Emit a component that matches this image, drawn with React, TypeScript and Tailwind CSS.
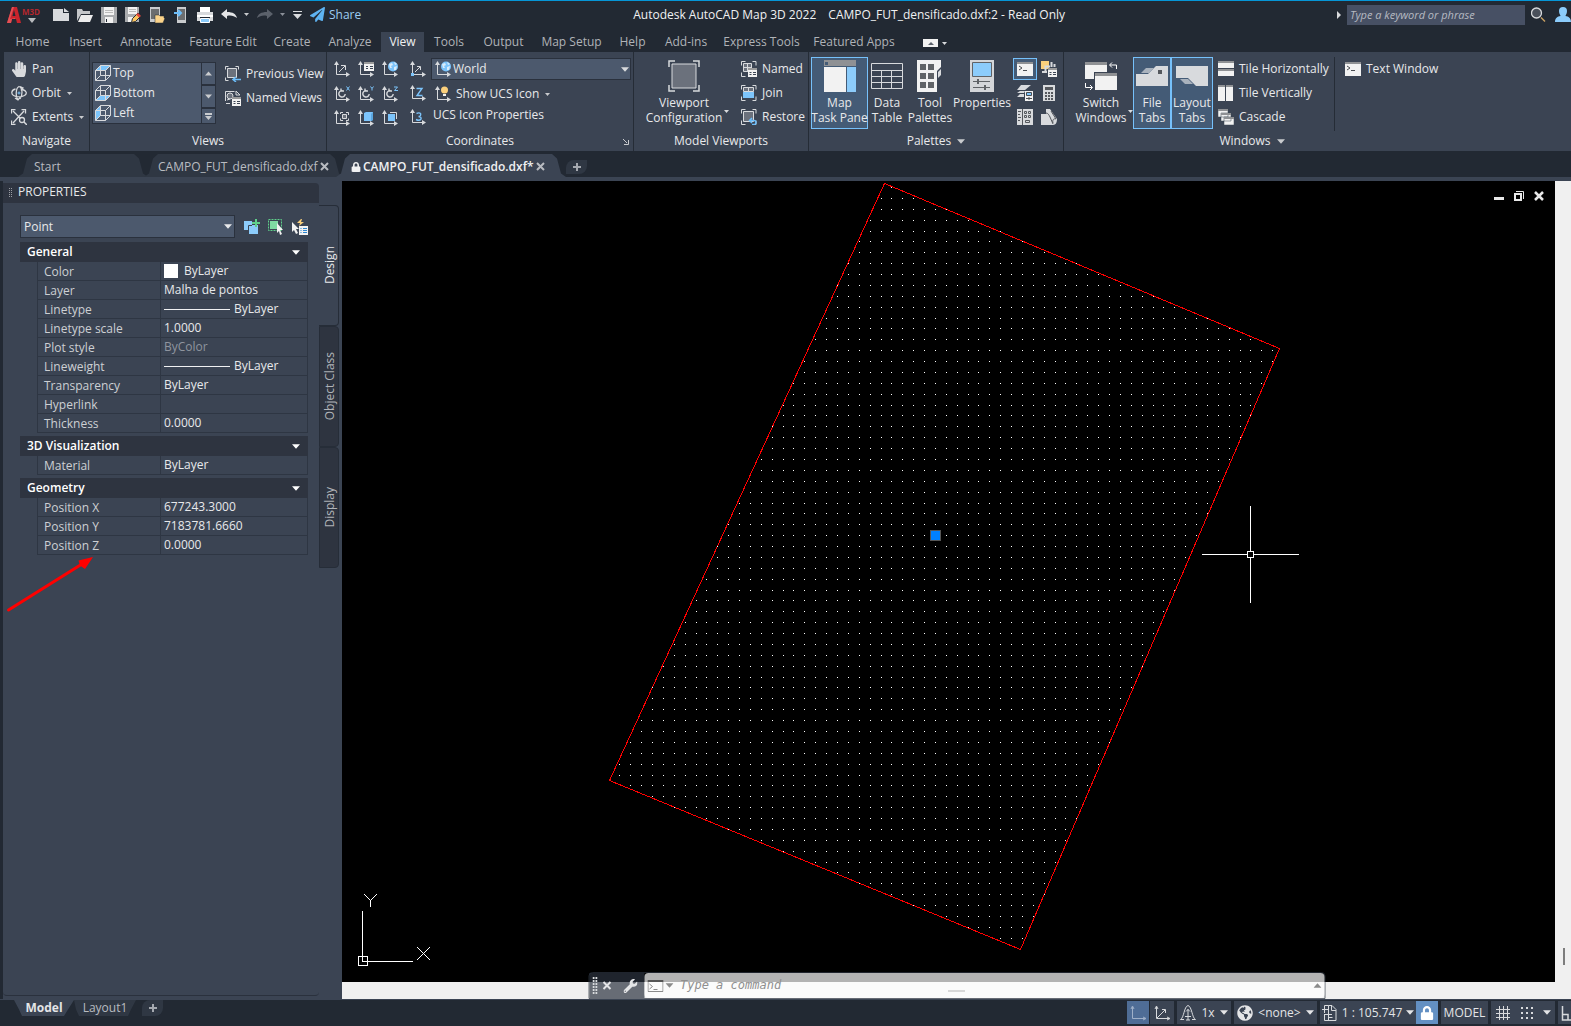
import React from 'react';
import { FaGlobeAmericas, FaHandPaper, FaLock, FaPaperPlane, FaWrench } from 'react-icons/fa';

const Caret: React.FC<{ className?: string; up?: boolean }> = ({ className = '', up }) => (
	<svg width="9" height="5" viewBox="0 0 9 5" className={`shrink-0 ${className}`}>
		<path d={up ? 'M0 5L4.5 0L9 5z' : 'M0 0h9L4.5 5z'} fill="currentColor" />
	</svg>
);

const SmallCaret: React.FC<{ className?: string }> = ({ className = '' }) => (
	<svg width="5" height="3" viewBox="0 0 5 3" className={`shrink-0 ${className}`}>
		<path d="M0 0h5L2.5 3z" fill="currentColor" />
	</svg>
);

const CloseMark = () => (
	<svg width="9" height="9" viewBox="0 0 9 9">
		<path d="M1 1l7 7M8 1L1 8" stroke="currentColor" strokeWidth="2" />
	</svg>
);

const PlusMark = () => (
	<svg width="8" height="8" viewBox="0 0 8 8">
		<path d="M4 0v8M0 4h8" stroke="#a5a9b0" strokeWidth="2" />
	</svg>
);

const Icon: React.FC<{ children: React.ReactNode; size?: number; className?: string }> = ({
	children,
	size = 16,
	className = '',
}) => (
	<svg
		width={size}
		height={size}
		viewBox={`0 0 ${size} ${size}`}
		fill="none"
		stroke="#d8dadd"
		className={`shrink-0 ${className}`}
	>
		{children}
	</svg>
);

/* Two axes with arrow heads, shared by all coordinate system icons */
const UcsIcon: React.FC<{ children?: React.ReactNode }> = ({ children }) => (
	<Icon>
		<path d="M2.5 2v11.5H14" />
		<path d="M0 4L2.5 0L5 4zM12 11l4 2.5L12 16z" fill="#d8dadd" stroke="none" />
		{children}
	</Icon>
);

const Globe = () => (
	<>
		<circle cx="11" cy="5.5" r="5" fill="#7cc4fb" stroke="none" />
		<path d="M7 3l3-1 1 2-2 1 1 2-2 0zM12 1l3 2-2 1zM12 6l3-1-1 4-2 0z" fill="#d9ecfa" stroke="none" />
	</>
);

const RotateMark = ({ axis }: { axis: string }) => (
	<>
		<path d="M9.5 5A3.2 3.2 0 1 0 11.2 8M7 2.5V5h3" strokeWidth="1.4" />
		{axis === 'X' && <path d="M12.5.5l3 4M15.5.5l-3 4" stroke="#7cc4fb" />}
		{axis === 'Y' && <path d="M12.5.5L14 2.5v2M15.5.5L14 2.5" stroke="#7cc4fb" />}
		{axis === 'Z' && <path d="M12 1h3.5l-3 3.5H16" stroke="#7cc4fb" />}
	</>
);

const listBox = (
	<>
		<path d="M6 1h10v9H6z" fill="#f2f2f2" stroke="none" />
		<path d="M6 1h10v2H6z" fill="#9a9a9a" stroke="none" />
		<path d="M8 5.5h2M12 5.5h3M8 7.5h2M12 7.5h3" stroke="#3b4453" />
	</>
);

const listBoxLow = (
	<>
		<path d="M7 7h9v9H7z" fill="#f2f2f2" stroke="none" />
		<path d="M7 7h9v2H7z" fill="#9a9a9a" stroke="none" />
		<path d="M8.5 11.5h2M12 11.5h3M8.5 13.5h2M12 13.5h3" stroke="#3b4453" />
	</>
);

const ucsTools = [
	{ label: 'UCS', mark: <path d="M5 11l6-6M7 4.5h4.5V9" /> },
	{ label: 'Named UCS', mark: listBox },
	{ label: 'World', mark: <Globe /> },
	{ label: 'Rotate X', mark: <RotateMark axis="X" /> },
	{ label: 'Rotate Y', mark: <RotateMark axis="Y" /> },
	{ label: 'Rotate Z', mark: <RotateMark axis="Z" /> },
	{
		label: 'View UCS',
		mark: (
			<>
				<path d="M8.5 4.5h4v4h-4z" fill="#6b717c" />
				<path d="M6.5 4V2.5H9M12 2.5h2.5V5M6.5 8.5v2H9M12 10.5h2.5v-2" />
			</>
		),
	},
	{
		label: 'Object UCS',
		mark: (
			<>
				<path d="M6 3l2-1h7v8l-2 1H6z" fill="#7cc4fb" stroke="none" />
				<path d="M13 4l2-2v8l-2 1z" fill="#5aa6df" stroke="none" />
			</>
		),
	},
	{
		label: 'Face UCS',
		mark: (
			<>
				<path d="M6 4h7v7H6z" fill="#7cc4fb" stroke="none" />
				<path d="M8 2.5h6.5V9" />
			</>
		),
	},
];

const ucsSideTools = [
	{
		label: 'Origin',
		mark: (
			<>
				<path d="M5 11l5-5M7 5.5h3.5V9" />
				<path d="M1 12h3v3H1z" fill="#7cc4fb" stroke="none" />
			</>
		),
	},
	{ label: 'Z-Axis Vector', mark: <path d="M6.5 3.5H12l-5 7h5.5" stroke="#7cc4fb" strokeWidth="1.4" /> },
	{
		label: '3-Point',
		mark: (
			<path
				d="M6.5 4.5c3-1.5 5 0 4 2-.5 1-2 1-2 1 2 0 3 1 2.5 2.5-1 1.5-3 1.5-5 .5"
				stroke="#7cc4fb"
				strokeWidth="1.4"
			/>
		),
	},
];

const menuTabs = [
	{ label: 'Home', width: 'w-[55px]' },
	{ label: 'Insert', width: 'w-[51px]' },
	{ label: 'Annotate', width: 'w-[70px]' },
	{ label: 'Feature Edit', width: 'w-[84px]' },
	{ label: 'Create', width: 'w-[54px]' },
	{ label: 'Analyze', width: 'w-[62px]' },
	{ label: 'View', width: 'w-[43px]' },
	{ label: 'Tools', width: 'w-[50px]' },
	{ label: 'Output', width: 'w-[59px]' },
	{ label: 'Map Setup', width: 'w-[77px]' },
	{ label: 'Help', width: 'w-[45px]' },
	{ label: 'Add-ins', width: 'w-[62px]' },
	{ label: 'Express Tools', width: 'w-[89px]' },
	{ label: 'Featured Apps', width: 'w-[96px]' },
];

const quickTools = [
	{
		label: 'New',
		icon: <path d="M0 2h10v4h6v8H0zM11 1l5 4h-5z" fill="#d8dadd" stroke="none" />,
	},
	{
		label: 'Open',
		icon: (
			<>
				<path d="M0 14V2h5l1 2h7v3H4z" fill="#c4c6c9" stroke="none" />
				<path d="M4 8h12l-3 7H1z" fill="#ececec" stroke="none" />
			</>
		),
	},
	{
		label: 'Save',
		icon: (
			<>
				<path d="M0 0h16v16H0z" fill="#a9abae" stroke="none" />
				<path d="M3 0h10v8H3zM4 10h8v6H4z" fill="#f2f2f2" stroke="none" />
				<path d="M4 3.5h8M4 5.5h8" stroke="#bbb" />
				<path d="M5.5 12v3" stroke="#222933" />
			</>
		),
	},
	{
		label: 'Save As',
		icon: (
			<>
				<path d="M0 0h14v15H0z" fill="#a9abae" stroke="none" />
				<path d="M3 0h9v7H3zM3 10h5v5H3z" fill="#f2f2f2" stroke="none" />
				<path d="M4 2.5h7M4 4.5h7" stroke="#bbb" />
				<path d="M6.5 15.5l1-4L13 6l3 3-5.5 5.5z" fill="#fbc55f" stroke="#222933" />
				<path d="M13 6l3 3-2 1.5-3-3z" fill="#e0453a" stroke="none" />
			</>
		),
	},
	{
		label: 'Open from Web',
		icon: (
			<>
				<path d="M1 0h10v15H1z" fill="#c9cbce" stroke="none" />
				<path d="M2 2h8v10H2z" fill="#6b6d70" stroke="none" />
				<path d="M6 16V8h4l1 1h4v2h1l-2 5z" fill="#fbd38a" stroke="#222933" strokeWidth=".5" />
			</>
		),
	},
	{
		label: 'Save to Web',
		icon: (
			<>
				<path d="M4 0h9v16H4z" fill="#c9cbce" stroke="none" />
				<path d="M5 2h7v11H5z" fill="#6b6d70" stroke="none" />
				<path d="M1 6h6M5 3l3 3-3 3" stroke="#6bbdfa" strokeWidth="2" />
			</>
		),
	},
	{
		label: 'Plot',
		icon: (
			<>
				<path d="M3 0h10v5H3z" fill="#fff" stroke="none" />
				<path d="M0 5h16v3H0zM0 10h3v4H0zM13 10h3v4h-3z" fill="#d8dadd" stroke="none" />
				<path d="M0 8h16v2H0z" fill="#fff" stroke="none" />
				<path d="M3.5 11.5h9v4h-9z" fill="#8cccfb" stroke="#fff" />
			</>
		),
	},
];

const bracket = 'M.5 4.5v-4h4M11.5.5H15v4M.5 11.5v4h4M11.5 15.5H15v-4';

const TitleBar = () => (
	<header className="flex h-8 items-center border-t border-[#0696d7] pb-1">
		<button aria-label="Application menu" className="ml-[7px] w-[46px]">
			<svg width="36" height="18" viewBox="0 0 36 18">
				<path d="M0 17L5 1h5l4 16h-4l-1-4H5l-1 4z" fill="#c8242c" />
				<path d="M7 4l1.5 6h-3z" fill="#222933" />
				<path d="M0 17L5 1h2L3 13l5-1v1H5l-1 4z" fill="#e35055" />
				<path d="M21 12h8l-4 5z" fill="#b9bbbe" />
				<text x="15" y="9" fontSize="8" fontWeight="700" fill="#b3262d">
					M3D
				</text>
			</svg>
		</button>
		<div className="flex gap-2">
			{quickTools.map((tool) => (
				<button key={tool.label} aria-label={tool.label}>
					<Icon>{tool.icon}</Icon>
				</button>
			))}
		</div>
		<button aria-label="Undo" className="ml-2">
			<Icon>
				<path d="M0 7l6-5v3c6 0 9 2 10 6-3-2-6-3-10-2v3z" fill="#e4e5e7" stroke="none" />
			</Icon>
		</button>
		<SmallCaret className="ml-[7px] text-[#c9cbce]" />
		<button aria-label="Redo" className="ml-2">
			<Icon>
				<path d="M16 7l-6-5v3C4 5 1 7 0 11c3-2 6-3 10-2v3z" fill="#5b616b" stroke="none" />
			</Icon>
		</button>
		<SmallCaret className="ml-[7px] text-[#8b9099]" />
		<button aria-label="Customize toolbar" className="ml-2">
			<svg width="9" height="8" viewBox="0 0 9 8">
				<path d="M0 0h9v1H0zM0 3h9L4.5 8z" fill="#d8dadd" />
			</svg>
		</button>
		<button className="ml-2 flex items-center gap-1 text-[#9ccdf2]">
			<FaPaperPlane size={15} className="text-[#5eb3f2]" />
			Share
		</button>
		<h1 className="flex flex-1 justify-center gap-3 text-[#f0f1f2]">
			<span>Autodesk AutoCAD Map 3D 2022</span>
			<span>CAMPO_FUT_densificado.dxf:2 - Read Only</span>
		</h1>
		<svg width="4" height="8" viewBox="0 0 4 8">
			<path d="M0 0l4 4-4 4z" fill="#d8dadd" />
		</svg>
		<input
			aria-label="Search"
			placeholder="Type a keyword or phrase"
			className="ml-[6px] h-5 w-[178px] bg-[#475064] px-[3px] text-[11px] italic placeholder:text-[#b6bac2]"
		/>
		<button aria-label="Search" className="ml-[6px]">
			<Icon>
				<circle cx="5.5" cy="6" r="5" fill="#4a505b" strokeWidth="1.3" />
				<path d="M10 10.5l4 4" stroke="#c9a063" strokeWidth="1.5" />
			</Icon>
		</button>
		<button aria-label="Account" className="ml-2">
			<Icon>
				<path
					d="M4 4a4 4 0 0 1 8 0c0 3-1.5 4-1.5 5 3 .5 5.500 2 5.500 6H0c0-4 2.500-5.500 5.500-6C5.500 8 4 7 4 4z"
					fill="#8cccfb"
					stroke="none"
				/>
			</Icon>
		</button>
	</header>
);

const MenuTabs = () => (
	<nav className="flex h-5 items-center pl-[5px]">
		{menuTabs.map((tab) => (
			<button
				key={tab.label}
				className={`h-5 shrink-0 whitespace-nowrap ${tab.width} ${
					tab.label === 'View' ? 'bg-[#3b4453] text-[#f0f1f2]' : 'text-[#b0b3b8]'
				}`}
			>
				{tab.label}
			</button>
		))}
		<button aria-label="Minimize ribbon" className="ml-[21px] flex items-center gap-1 pt-[2px] text-[#d8dadd]">
			<svg width="15" height="8" viewBox="0 0 15 8">
				<path d="M0 0h15v8H0z" fill="#f2f2f2" />
				<path d="M5 6l3-3 3 3z" fill="#5b616b" />
			</svg>
			<SmallCaret />
		</button>
	</nav>
);

const RibbonPanel: React.FC<{
	title: string;
	width: string;
	children: React.ReactNode;
	caret?: boolean;
	launcher?: boolean;
	last?: boolean;
}> = ({ title, width, children, caret, launcher, last }) => (
	<section
		className={`flex shrink-0 flex-col ${width} ${last ? '' : 'border-r border-[#252c36]'}`}
	>
		<div className="flex h-[79px] pt-[5px]">{children}</div>
		<h2 className="relative flex h-5 items-center justify-center gap-[6px] text-[#e8e9eb]">
			{title}
			{caret && <Caret className="w-2 text-[#c9cbce]" />}
			{launcher && (
				<svg width="6" height="6" viewBox="0 0 6 6" className="absolute right-1 bottom-[6px]">
					<path d="M0 0l4 4M5.5 1v4.5H1" stroke="#c9cbce" fill="none" />
				</svg>
			)}
		</h2>
	</section>
);

const SmallButton: React.FC<{ icon: React.ReactNode; label: string; caret?: boolean }> = ({
	icon,
	label,
	caret,
}) => (
	<button className="flex h-6 items-center gap-[5px] whitespace-nowrap">
		{icon}
		{label}
		{caret && <SmallCaret className="ml-px text-[#c9cbce]" />}
	</button>
);

const BigButton: React.FC<{
	icon: React.ReactNode;
	lines: string[];
	width: string;
	active?: boolean;
}> = ({ icon, lines, width, active }) => (
	<button
		className={`flex h-[72px] shrink-0 flex-col items-center border pt-[2px] leading-[15px] whitespace-nowrap ${width} ${
			active ? 'border-[#76c1fb] bg-[#445b76]' : 'border-transparent'
		}`}
	>
		<Icon size={32} className="mb-[3px]">
			{icon}
		</Icon>
		{lines.map((line) => (
			<span key={line}>{line}</span>
		))}
	</button>
);

const cubeEdges = 'M.5 5.5h10v10H.5zM5.5.5h10v10h-10zM.5 5.5l5-5M10.5 5.5l5-5M10.5 15.5l5-5M.5 15.5l5-5';

const galleryViews = [
	{ label: 'Top', face: 'M.5 5.5l5-5h10l-5 5z' },
	{ label: 'Bottom', face: 'M.5 15.5l5-5h10l-5 5z' },
	{ label: 'Left', face: 'M.5 5.5l5-5v10l-5 5z' },
];

const NavigatePanel = () => (
	<RibbonPanel title="Navigate" width="w-[86px]">
		<div className="flex flex-col items-start pl-[7px]">
			<SmallButton icon={<FaHandPaper size={16} className="text-[#d8dadd]" />} label="Pan" />
			<SmallButton
				icon={
					<Icon>
						<path
							d="M4.5 4C0 5 0 9 2.5 10.5c3 1.5 8 1.5 11 0 3-2 2-5-2-6M7 15C4.5 12 4.5 3 8 1.5c3.5 1 4 8 1 12.5M9 1.5l3 1.5-2 2.5M4 13l3 2 2-2.5"
							strokeWidth="1.3"
						/>
						<path d="M8 6.5v3M6.5 8h3" stroke="#7cc4fb" />
					</Icon>
				}
				label="Orbit"
				caret
			/>
			<SmallButton
				icon={
					<Icon>
						<path d="M2 2l9 9M13 2L2 14M.5 4.5v-4h4M10.5.5h4v4M.5 11.5v4h4" strokeWidth="1.3" />
						<circle cx="11" cy="11" r="2.5" fill="#3b4453" strokeWidth="1.3" />
						<path d="M13 13l3 3" strokeWidth="1.5" />
					</Icon>
				}
				label="Extents"
				caret
			/>
		</div>
	</RibbonPanel>
);

const ViewsPanel = () => (
	<RibbonPanel title="Views" width="w-[237px]">
		<div className="mt-[5px] ml-[2px] flex h-[62px] w-[124px] gap-px border border-[#2a313d] bg-[#2a313d]">
			<div className="flex flex-1 flex-col bg-[#4c596d]">
				{galleryViews.map((view) => (
					<button key={view.label} className="flex h-5 items-center gap-[2px] pl-[2px]">
						<Icon>
							<path d={view.face} fill="#7cc4fb" stroke="none" />
							<path d={cubeEdges} />
						</Icon>
						{view.label}
					</button>
				))}
			</div>
			<div className="flex w-[13px] flex-col gap-[2px] text-[#c9cbce]">
				<button aria-label="Scroll up" className="flex flex-1 items-center justify-center bg-[#4c596d]">
					<Caret up className="w-[7px]" />
				</button>
				<button aria-label="Scroll down" className="flex flex-1 items-center justify-center bg-[#4c596d]">
					<Caret className="w-[7px]" />
				</button>
				<button aria-label="More views" className="flex h-[14px] items-center justify-center bg-[#4c596d]">
					<svg width="7" height="7" viewBox="0 0 7 7">
						<path d="M0 0h7v2H0zM0 3h7L3.5 7z" fill="currentColor" />
					</svg>
				</button>
			</div>
		</div>
		<div className="ml-[9px] flex flex-col items-start pt-[5px]">
			<SmallButton
				icon={
					<Icon>
						<path d="M.5 3.5v-3h3M10.5.5h3v3M.5 11.5v3h3" />
						<path d="M2.5 2.5h9v9h-9z" fill="#6b717c" />
						<path d="M16 13.5H9M11 11l-3 2.5L11 16" stroke="#6bbdfa" strokeWidth="1.5" />
					</Icon>
				}
				label="Previous View"
			/>
			<SmallButton
				icon={
					<Icon>
						<path d="M.5 11V1.5h9M11 1l4 4h-4z" />
						<circle cx="5" cy="6" r="3" fill="#6b717c" />
						<path d="M2 10l3-1M1 13.5h4" />
						{listBoxLow}
					</Icon>
				}
				label="Named Views"
			/>
		</div>
	</RibbonPanel>
);

const CoordinatesPanel = () => (
	<RibbonPanel title="Coordinates" width="w-[307px]" launcher>
		<div className="ml-[7px] grid grid-cols-3 gap-x-2">
			{ucsTools.map((tool) => (
				<button key={tool.label} aria-label={tool.label} className="flex h-6 items-center">
					<UcsIcon>{tool.mark}</UcsIcon>
				</button>
			))}
		</div>
		<div className="ml-3 flex flex-col">
			{ucsSideTools.map((tool) => (
				<button key={tool.label} aria-label={tool.label} className="flex h-6 items-center">
					<UcsIcon>{tool.mark}</UcsIcon>
				</button>
			))}
		</div>
		<div className="ml-[5px] flex w-[200px] flex-col items-start pt-px">
			<div className="flex h-[22px] w-full items-center border border-[#2a313d] bg-[#4c596d] pr-px pl-[3px]">
				<UcsIcon>
					<Globe />
				</UcsIcon>
				<select aria-label="Current UCS" className="ml-[2px] flex-1 appearance-none">
					<option>World</option>
				</select>
				<Caret className="w-2 text-[#d8dadd]" />
			</div>
			<div className="mt-[2px] ml-1 flex">
				<SmallButton
					icon={
						<UcsIcon>
							<circle cx="9.5" cy="4" r="3.5" fill="#fbd07c" stroke="none" />
							<path d="M8 8h3v2H8z" fill="#f2f2f2" stroke="none" />
						</UcsIcon>
					}
					label="Show UCS Icon"
					caret
				/>
			</div>
			<button className="ml-[2px] h-[18px]">UCS Icon Properties</button>
		</div>
	</RibbonPanel>
);

const ViewportsPanel = () => (
	<RibbonPanel title="Model Viewports" width="w-[175px]">
		<div className="ml-[10px] flex items-start">
			<BigButton
				width="w-20"
				lines={['Viewport', 'Configuration']}
				icon={
					<>
						<path d="M4 4h24v24H4z" fill="#6b717c" />
						<path d="M1 7V1h6M25 1h6v6M1 25v6h6M25 31h6v-6" strokeWidth="1.5" />
					</>
				}
			/>
			<SmallCaret className="mt-[53px] text-[#d8dadd]" />
		</div>
		<div className="ml-3 flex flex-col items-start">
			<SmallButton
				icon={
					<Icon>
						<path d={bracket} />
						<path d="M2.5 2.5h8v8h-8zM6.5 2.5v8M2.5 6.5h8" fill="#6b717c" />
						{listBoxLow}
					</Icon>
				}
				label="Named"
			/>
			<SmallButton
				icon={
					<Icon>
						<path d={bracket} />
						<path d="M2 7h11v6H2z" fill="#7cc4fb" stroke="none" />
						<path d="M2.5 2.5h5v4h-5zM7.5 2.5h5v4h-5z" fill="#6b717c" />
					</Icon>
				}
				label="Join"
			/>
			<SmallButton
				icon={
					<Icon>
						<path d={bracket} />
						<path d="M2.5 2.5h10v10h-10z" fill="#6b717c" />
						<path
							d="M8 11.5h5a2 2 0 0 1 0 4h-2M11 9l-2.5 2.5L11 14"
							stroke="#6bbdfa"
							strokeWidth="1.5"
						/>
					</Icon>
				}
				label="Restore"
			/>
		</div>
	</RibbonPanel>
);

const consoleIcon = (
	<>
		<path d="M0 1h16v14H0z" fill="#f2f2f2" stroke="none" />
		<path d="M0 1h16v2H0z" fill="#8f9194" stroke="none" />
		<path d="M2 5l3 2-3 2M6 9.5h4" stroke="#4a4d52" />
	</>
);

const paletteTools = [
	{ label: 'Command Line', icon: consoleIcon },
	{
		label: 'Layer Properties',
		icon: (
			<>
				<path d="M0 0h8v8H0z" fill="#fbd07c" stroke="none" />
				<path d="M4.5 11V5.5H9M10.5 1v5M13.5 3v3M1 11h5" strokeWidth="2" />
				{listBoxLow}
			</>
		),
	},
	{
		label: 'Sheet Set Manager',
		icon: (
			<>
				<path d="M4 0h10L8 5H0zM3 6h5l-1 2H0zM3 9h4v3H0z" fill="#d8dadd" stroke="none" />
				<path d="M8 6h8v10H8z" fill="#f2f2f2" stroke="none" />
				<path d="M9.5 7.5h5v3h-5z" fill="#7cc4fb" stroke="#4a4d52" />
				<path d="M9 13.5h6M12 12v3" stroke="#4a4d52" />
			</>
		),
	},
	{
		label: 'Quick Calculator',
		icon: (
			<>
				<path d="M2 0h12v16H2z" fill="#d8dadd" stroke="none" />
				<path d="M4 2h8v3H4z" fill="#55585d" stroke="none" />
				<path d="M4 8h8M4 11h8M4 14h8" stroke="#55585d" strokeWidth="2" strokeDasharray="2 1" />
			</>
		),
	},
	{
		label: 'DesignCenter',
		icon: (
			<>
				<path d="M0 0h16v16H0z" fill="#d8dadd" stroke="none" />
				<path d="M1 2.5h3M1 5.5h2M1 8.5h3M1 11.5h2M5.5 0v16" stroke="#55585d" />
				<path
					d="M7.5 2.5h2v2h-2zM11.5 2.5h2v2h-2zM7.5 6.5h2v2h-2zM11.5 6.5h2v2h-2zM8.5 11.5h4v2h-4z"
					stroke="#55585d"
				/>
			</>
		),
	},
	{
		label: 'Markup Set Manager',
		icon: (
			<>
				<path d="M0 5h5V0h4l7 10c0 3-1 6-4 6H0z" fill="#d8dadd" stroke="none" />
				<path d="M5 4c2 0 3 2 4 4l3 7M10 2l5 8c-2-1-4 1-3 4" stroke="#55585d" />
			</>
		),
	},
];

const PalettesPanel = () => (
	<RibbonPanel title="Palettes" width="w-[255px]" caret>
		<div className="ml-[2px] flex">
			<BigButton
				active
				width="w-[57px]"
				lines={['Map', 'Task Pane']}
				icon={
					<g stroke="none">
						<path d="M0 0h32v6H0z" fill="#8f9194" />
						<path d="M1 2h3v3H1z" fill="#445b76" />
						<path d="M0 7h22v25H0z" fill="#f2f2f2" />
						<path d="M23 7h9v25h-9z" fill="#8cccfb" />
					</g>
				}
			/>
			<BigButton
				width="w-[38px]"
				lines={['Data', 'Table']}
				icon={<path d="M.5 3.5h31v25H.5zM.5 10.5h31M.5 16.5h31M.5 22.5h31M10.5 10.5v18M20.5 10.5v18" />}
			/>
			<BigButton
				width="w-12"
				lines={['Tool', 'Palettes']}
				icon={
					<g stroke="none">
						<path d="M3 0h24v7l-4 4v21H3z" fill="#f2f2f2" />
						<path d="M27 9v6l-3 3v-6z" fill="#d8dadd" />
						<path
							d="M6 4h6v6H6zM14 4h6v6h-6zM6 13h6v6H6zM14 13h6v6h-6zM6 22h6v6H6zM14 22h6v6h-6z"
							fill="#606367"
						/>
					</g>
				}
			/>
			<BigButton
				width="w-14"
				lines={['Properties']}
				icon={
					<>
						<path d="M4 0h24v32H4z" fill="#d4d6d9" stroke="none" />
						<path d="M6.5 2.5h19v14h-19z" fill="#8cccfb" stroke="#606367" />
						<path d="M7 21.5h17M7 27.5h17" stroke="#606367" />
						<path d="M12 19v5M19 25v5" stroke="#606367" strokeWidth="2" />
					</>
				}
			/>
		</div>
		<div className="ml-[3px] grid h-[72px] grid-cols-[24px_24px] place-items-center">
			{paletteTools.map((tool, i) => (
				<button
					key={tool.label}
					aria-label={tool.label}
					className={`flex h-[22px] w-6 items-center justify-center border ${
						i === 0 ? 'border-[#76c1fb] bg-[#445b76]' : 'border-transparent'
					}`}
				>
					<Icon>{tool.icon}</Icon>
				</button>
			))}
		</div>
	</RibbonPanel>
);

const WindowsPanel = () => (
	<RibbonPanel title="Windows" width="w-[376px]" caret last>
		<div className="ml-[10px] flex items-start">
			<BigButton
				width="w-[54px]"
				lines={['Switch', 'Windows']}
				icon={
					<>
						<g stroke="none">
							<path d="M0 2h22v17H0z" fill="#f2f2f2" />
							<path d="M0 2h22v3H0z" fill="#8f9194" />
							<path d="M9 12h23v18H9z" fill="#3b4453" />
							<path d="M10 13h22v17H10z" fill="#f2f2f2" />
							<path d="M10 13h22v3H10z" fill="#8f9194" />
						</g>
						<path d="M31.5 9V5H25M27 2.5L24.5 5 27 7.5M.5 23v4.5H7M5 25l2.5 2.5L5 30" stroke="#fff" />
					</>
				}
			/>
			<SmallCaret className="mt-[53px] text-[#d8dadd]" />
		</div>
		<BigButton
			active
			width="w-[38px]"
			lines={['File', 'Tabs']}
			icon={
				<g stroke="none">
					<path d="M0 26V14h12l8-8h12v20z" fill="#d8dadd" />
					<path d="M5 13l5-5h8l-5 5z" fill="#a9b2bd" />
					<path d="M22 10h4v4h-4z" fill="#55585d" />
				</g>
			}
		/>
		<BigButton
			active
			width="w-[42px]"
			lines={['Layout', 'Tabs']}
			icon={
				<g stroke="none">
					<path d="M0 6h32v20H20l-8-8H0z" fill="#d8dadd" />
					<path d="M4 19h8l5 5H9z" fill="#a9b2bd" />
				</g>
			}
		/>
		<div className="ml-[5px] flex w-[117px] flex-col items-start border-r border-[#252c36]">
			<SmallButton
				icon={
					<Icon>
						<path d="M0 0h16v7H0zM0 8h16v7H0z" fill="#f2f2f2" stroke="none" />
						<path d="M0 0h16v2H0zM0 8h16v2H0z" fill="#8f9194" stroke="none" />
					</Icon>
				}
				label="Tile Horizontally"
			/>
			<SmallButton
				icon={
					<Icon>
						<path d="M0 0h7v16H0zM8 0h7v16H8z" fill="#f2f2f2" stroke="none" />
						<path d="M0 0h7v2H0zM8 0h7v2H8z" fill="#8f9194" stroke="none" />
					</Icon>
				}
				label="Tile Vertically"
			/>
			<SmallButton
				icon={
					<Icon>
						<path
							d="M0 0h10v8H0zM3 4h10v8H3zM6 8h10v8H6z"
							fill="#f2f2f2"
							stroke="#3b4453"
							strokeWidth=".5"
						/>
						<path d="M0 0h10v2H0zM3 4h10v2H3zM6 8h10v2H6z" fill="#8f9194" stroke="none" />
					</Icon>
				}
				label="Cascade"
			/>
		</div>
		<div className="ml-[10px]">
			<SmallButton icon={<Icon>{consoleIcon}</Icon>} label="Text Window" />
		</div>
	</RibbonPanel>
);

const fileTabClip =
	'[clip-path:polygon(0_100%,5px_85%,9px_20%,14px_0,calc(100%-14px)_0,calc(100%-9px)_20%,calc(100%-5px)_85%,100%_100%)]';

const FileTabs = () => (
	<nav className="flex h-[30px] items-start border-b-4 border-[#3b4453] pt-[3px] text-[#b9bcc1]">
		<div className={`ml-[18px] flex h-[23px] w-[130px] items-center bg-[#2f3743] pt-[2px] pl-4 ${fileTabClip}`}>
			<button>Start</button>
		</div>
		<div className={`-ml-1 flex h-[23px] w-[200px] items-center bg-[#2f3743] pt-[2px] pl-[14px] ${fileTabClip}`}>
			<button className="w-[162px] text-left whitespace-nowrap">CAMPO_FUT_densificado.dxf</button>
			<button aria-label="Close tab">
				<CloseMark />
			</button>
		</div>
		<div
			className={`-ml-2 flex h-[23px] w-[230px] items-center bg-[#3b4453] pt-[2px] pl-[15px] text-[#f0f1f2] ${fileTabClip}`}
		>
			<FaLock size={10} />
			<button className="ml-[2px] w-[173px] text-left font-semibold whitespace-nowrap">
				CAMPO_FUT_densificado.dxf*
			</button>
			<button aria-label="Close tab" className="text-[#b9bcc1]">
				<CloseMark />
			</button>
		</div>
		<button
			aria-label="New tab"
			className="mt-[6px] flex h-[14px] w-[21px] items-center justify-center rounded-tl-lg rounded-br-lg bg-[#2f3743]"
		>
			<PlusMark />
		</button>
	</nav>
);

const lineSample = (
	<span className="flex items-center gap-1">
		<span className="h-px w-[66px] bg-[#f0f1f2]" />
		ByLayer
	</span>
);

const propertyGroups: { title: string; rows: { name: string; value: React.ReactNode }[] }[] = [
	{
		title: 'General',
		rows: [
			{
				name: 'Color',
				value: (
					<span className="flex items-center gap-[6px]">
						<span className="h-[14px] w-[14px] bg-white" />
						ByLayer
					</span>
				),
			},
			{ name: 'Layer', value: 'Malha de pontos' },
			{ name: 'Linetype', value: lineSample },
			{ name: 'Linetype scale', value: '1.0000' },
			{ name: 'Plot style', value: <span className="text-[#8f959f]">ByColor</span> },
			{ name: 'Lineweight', value: lineSample },
			{ name: 'Transparency', value: 'ByLayer' },
			{ name: 'Hyperlink', value: '' },
			{ name: 'Thickness', value: '0.0000' },
		],
	},
	{ title: '3D Visualization', rows: [{ name: 'Material', value: 'ByLayer' }] },
	{
		title: 'Geometry',
		rows: [
			{ name: 'Position X', value: '677243.3000' },
			{ name: 'Position Y', value: '7183781.6660' },
			{ name: 'Position Z', value: '0.0000' },
		],
	},
];

const PropertiesPalette = () => (
	<aside className="relative ml-[3px] flex w-[339px] shrink-0 bg-[#3b4453]">
		<div className="flex w-[316px] flex-col">
			<div className="mt-[2px] flex h-5 items-center gap-[6px] rounded-tr bg-[#2e3440] pl-[6px]">
				<svg width="3" height="10" viewBox="0 0 3 10">
					<path d="M.5 0v10M2.5 0v10" stroke="#9a9da3" strokeDasharray="1 1" />
				</svg>
				<h2 className="pb-[3px]">PROPERTIES</h2>
			</div>
			<div className="mb-[3px] flex-1 rounded-b border-b border-[#2a313d] pt-3 pr-[11px] pl-[17px]">
				<div className="mb-1 flex items-center">
					<div className="mr-2 flex h-[23px] w-[215px] items-center border border-[#2a313d] bg-[#4c596d] pr-[2px] pl-[3px]">
						<select aria-label="Selection" className="flex-1 appearance-none">
							<option>Point</option>
						</select>
						<Caret className="w-2" />
					</div>
					<div className="ml-px flex gap-2">
						<button aria-label="Toggle pickadd">
							<Icon>
								<path d="M0 2h8v4h6v9H5v-4H0z" fill="#8cccfb" stroke="none" />
								<path d="M4.5 11V6.5H8" stroke="#3b4453" />
								<path d="M12 0v8M8 4h8" stroke="#5fd08b" strokeWidth="2" />
							</Icon>
						</button>
						<button aria-label="Select objects">
							<Icon>
								<path d="M.5.5h13v11H.5z" stroke="#5fd08b" strokeDasharray="2 1" />
								<path d="M2 2h8v8H2z" fill="#7fd9a2" stroke="none" />
								<path d="M9 4l6 7h-3l2 4-2 1-1-4-2 2z" fill="#f2f2f2" stroke="none" />
							</Icon>
						</button>
						<button aria-label="Quick select">
							<Icon>
								<path d="M9 0L5 4h3L7 7l5-4H9l1-3z" fill="#fbd07c" stroke="none" />
								<path d="M0 3l7 7H4l2 4-2 1-2-4-2 2z" fill="#f2f2f2" stroke="none" />
								<path d="M7 7h9v9H7z" fill="#f2f2f2" stroke="none" />
								<path
									d="M8.5 9.5h1M11 9.5h4M8.5 11.5h1M11 11.5h4M8.5 13.5h1M11 13.5h4"
									stroke="#2d86d0"
								/>
							</Icon>
						</button>
					</div>
				</div>
				{propertyGroups.map((group) => (
					<section key={group.title} className="mb-[3px]">
						<button className="flex h-5 w-full items-center justify-between bg-[#2e3440] pr-2 pl-[7px] font-semibold text-white">
							{group.title}
							<Caret className="w-2" />
						</button>
						<table className="ml-[17px] w-[271px] table-fixed border-separate border-spacing-0 border-l border-[#2e3643]">
							<tbody>
								{group.rows.map((row) => (
									<tr key={row.name}>
										<th
											scope="row"
											className="h-[19px] w-[123px] border-r border-b border-[#2e3643] p-0 pt-[2px] pl-[6px] text-left leading-4 font-normal text-[#cdd0d4]"
										>
											{row.name}
										</th>
										<td className="h-[19px] border-r border-b border-[#2e3643] p-0 pl-[3px] leading-4">
											{row.value}
										</td>
									</tr>
								))}
							</tbody>
						</table>
					</section>
				))}
			</div>
		</div>
		<div className="mt-6 flex w-5 flex-col">
			{['Design', 'Object Class', 'Display'].map((tab, i) => (
				<button
					key={tab}
					className={`flex h-[121px] w-5 items-center justify-center rounded-r border border-[#262d38] ${
						i === 0 ? 'border-l-0' : 'bg-[#2e3440] text-[#b0b3b8]'
					}`}
				>
					<span className="rotate-180 pr-[2px] [writing-mode:vertical-rl]">{tab}</span>
				</button>
			))}
		</div>
		{/* Red callout pointing at Position Z */}
		<svg width="96" height="64" viewBox="0 0 96 64" className="absolute top-[370px] left-0">
			<path d="M5.5 59L79 13" stroke="#f00" strokeWidth="3" strokeLinecap="round" />
			<path d="M90 6L75.5 9.5l1.5 5 5 3.5z" fill="#f00" />
		</svg>
	</aside>
);

const corners = [
	[542.5, 2.5],
	[937.5, 167.5],
	[678.5, 768.5],
	[267.5, 599.5],
];

const PITCH = 10.88;

const isInside = (x: number, y: number) =>
	corners.every(([x1, y1], i) => {
		const [x2, y2] = corners[(i + 1) % corners.length];
		return (x2 - x1) * (y - y1) - (y2 - y1) * (x - x1) >= -200;
	});

/* One 1px square for each mesh point that falls inside the field outline */
const meshPath = () => {
	let d = '';
	for (let row = 0; row < 70; row++) {
		for (let col = -26; col < 37; col++) {
			const x = Math.floor(549.9 + col * PITCH);
			const y = Math.floor(6.5 + row * PITCH);
			if (isInside(x + 0.5, y + 0.5)) {
				d += `M${x} ${y}h1v1h-1z`;
			}
		}
	}
	return d;
};

const Drawing = () => (
	<svg className="absolute inset-0 h-full w-full" fill="none" shapeRendering="crispEdges">
		<path d={`M${corners.map((c) => c.join(' ')).join('L')}z`} stroke="#f00" />
		<path d={meshPath()} fill="#fff" />
		<path d="M588.5 349.5h10v10h-10z" fill="#0080ff" stroke="#555" />
		<path d="M908.5 325v45M908.5 377v45M860 373.5h45M912 373.5h45" stroke="#fff" />
		<path d="M905.5 370.5h6v6h-6z" stroke="#fff" />
		<path d="M20.5 730v50.5H71M16.5 775.5h9v9h-9z" stroke="#fff" />
		<path d="M22 713l6.5 6.5V726M35 713l-6.5 6.5M75 766l13 13M88 766l-13 13" stroke="#fff" />
	</svg>
);

const CommandLine = () => (
	<div className="absolute bottom-0 left-1/2 flex h-[27px] w-[737px] max-w-full -translate-x-1/2 rounded-t-sm border border-[#2c3340]/70">
		<div className="flex w-[55px] items-center bg-[#2c3340]/70 pl-[3px] text-[#e4e5e7]">
			<svg width="5" height="17" viewBox="0 0 5 17">
				<path d="M1 0v17M4 0v17" stroke="#d8dadd" strokeWidth="2" strokeDasharray="2 1" />
			</svg>
			<button aria-label="Close command line" className="ml-[5px]">
				<CloseMark />
			</button>
			<button aria-label="Customize" className="ml-3">
				<FaWrench size={14} />
			</button>
		</div>
		<div className="flex flex-1 items-center rounded-sm bg-white/70 pl-[3px] text-[#8b8b8b]">
			<svg width="16" height="12" viewBox="0 0 16 12" fill="none" stroke="#8b8b8b">
				<path d="M.5.5h15v11H.5z" />
				<path d="M0 1h16" stroke="#555" strokeWidth="2" />
				<path d="M2 4l3 2.5L2 9M6 9.5h4" />
			</svg>
			<Caret className="ml-[2px] w-2" />
			<input
				aria-label="Command"
				placeholder="Type a command"
				className="ml-[7px] flex-1 pb-px font-['DejaVu_Sans_Mono',monospace] text-[12px] italic placeholder:text-[#8f8f8f]"
			/>
			<Caret up className="mr-[3px] mb-px w-2" />
		</div>
	</div>
);

const Canvas = () => (
	<main className="relative flex min-w-0 flex-1 flex-col bg-[#f0f0f0]">
		<div className="flex flex-1">
			<div className="relative flex-1 overflow-hidden bg-black">
				<Drawing />
				<div className="absolute top-[10px] right-[11px] flex items-center gap-[10px] text-[#e8e8e8]">
					<button aria-label="Minimize">
						<svg width="10" height="10" viewBox="0 0 10 10">
							<path d="M0 6h10v3H0z" fill="currentColor" />
						</svg>
					</button>
					<button aria-label="Restore">
						<svg width="10" height="10" viewBox="0 0 10 10" fill="none" stroke="currentColor">
							<path d="M1 3h6v6H1z" strokeWidth="2" />
							<path d="M2 .5h7.5V8" />
						</svg>
					</button>
					<button aria-label="Close">
						<svg width="10" height="10" viewBox="0 0 10 10">
							<path d="M1 1l8 8M9 1L1 9" stroke="currentColor" strokeWidth="2.5" />
						</svg>
					</button>
				</div>
			</div>
			<div className="flex w-4 flex-col justify-end pb-[17px] pl-2">
				<div className="h-[17px] w-[2px] bg-[#7d7d7d]" />
			</div>
		</div>
		<div className="flex h-[17px] items-center justify-center">
			<div className="h-[2px] w-[17px] bg-[#7d7d7d]" />
		</div>
		<CommandLine />
	</main>
);

const statusCell = 'flex h-[23px] shrink-0 items-center justify-center';

const StatusBar = () => (
	<footer className="flex h-[27px] items-start border-t border-[#3b4453] text-[#e4e5e7]">
		<button className="ml-[14px] h-4 w-[60px] bg-[#3b4453] font-bold [clip-path:polygon(0_0,100%_0,54px_60%,50px_100%,8px_100%,5px_60%)]">
			Model
		</button>
		<button className="h-4 w-[62px] bg-[#2f3743] text-[#b9bcc1] [clip-path:polygon(0_0,100%_0,57px_60%,54px_100%,5px_100%,2px_60%)]">
			Layout1
		</button>
		<button
			aria-label="New layout"
			className="ml-[6px] flex h-4 w-[21px] items-center justify-center rounded-tl-lg rounded-br-lg bg-[#2f3743]"
		>
			<PlusMark />
		</button>
		<div className="mt-px -mr-[3px] ml-auto flex gap-[3px]">
			<div className="flex gap-px">
				<button aria-label="Model space" className={`${statusCell} w-[22px] bg-[#4f6d96]`}>
					<Icon>
						<path d="M2.5 2v11.5H15M1 4l1.5-3L4 4M13 12l3 1.5L13 15" stroke="#9fb0c8" />
					</Icon>
				</button>
				<button aria-label="Infer constraints" className={`${statusCell} w-6 bg-[#3b4453]`}>
					<Icon>
						<path d="M2.5 2v11.5H15M1 4l1.5-3L4 4M13 12l3 1.5L13 15M3 13l8-8M8 4.5h3.5V8" />
					</Icon>
				</button>
			</div>
			<button className={`${statusCell} w-[54px] gap-[5px] bg-[#3b4453]`}>
				<Icon>
					<path d="M.5 14.5C4 13 4 1.5 8 .5c4 1 4 12.5 7.5 14H12M.5 14.5H4M8 4v11M6 6.5l2-2 2 2M5 11.5h6M6 15h4" />
				</Icon>
				1x
				<Caret className="w-2" />
			</button>
			<button className={`${statusCell} w-[83px] gap-[5px] bg-[#3b4453]`}>
				<FaGlobeAmericas size={16} />
				&lt;none&gt;
				<Caret className="w-2" />
			</button>
			<div className="flex">
				<button className={`${statusCell} w-24 gap-1 bg-[#3b4453] whitespace-nowrap`}>
					<Icon>
						<path d="M2.5 8V.5h4v15M6.5.5H10l4 4v11H2.5V10M9.5.5v5H14M0 4.5h6M2 9.5h8M6.5 12.5h4" />
					</Icon>
					1 : 105.747
					<Caret className="w-2" />
				</button>
				<button aria-label="Lock scale" className={`${statusCell} w-[22px] bg-[#6390c3] text-white`}>
					<FaLock size={14} />
				</button>
			</div>
			<button className={`${statusCell} w-[47px] bg-[#3b4453]`}>MODEL</button>
			<div className={`${statusCell} w-16 gap-2 bg-[#3b4453]`}>
				<button aria-label="Grid">
					<Icon>
						<path d="M4.5 1v14M8.5 1v14M12.5 1v14M1 4.5h14M1 8.5h14M1 12.5h14" />
					</Icon>
				</button>
				<button aria-label="Snap">
					<Icon>
						<path d="M2 3h12M2 8h12M2 13h12" strokeWidth="2" strokeDasharray="2 3" />
					</Icon>
				</button>
				<Caret className="w-2" />
			</div>
			<button aria-label="Ortho mode" className={`${statusCell} w-4 bg-[#3b4453]`}>
				<Icon>
					<path d="M4.5 1v14H16M4.5 9.5H10V15" strokeWidth="1.5" />
				</Icon>
			</button>
		</div>
	</footer>
);

const App: React.FC = () => {
	return (
		<div className="flex min-h-screen flex-col overflow-hidden bg-[#222933] font-['Open_Sans',sans-serif] text-[12px] leading-4 text-[#e8e9eb]">
			<TitleBar />
			<MenuTabs />
			<div className="ml-1 flex h-[99px] bg-[#3b4453]">
				<NavigatePanel />
				<ViewsPanel />
				<CoordinatesPanel />
				<ViewportsPanel />
				<PalettesPanel />
				<WindowsPanel />
			</div>
			<FileTabs />
			<div className="flex flex-1">
				<PropertiesPalette />
				<Canvas />
			</div>
			<StatusBar />
		</div>
	);
};

export default App;
